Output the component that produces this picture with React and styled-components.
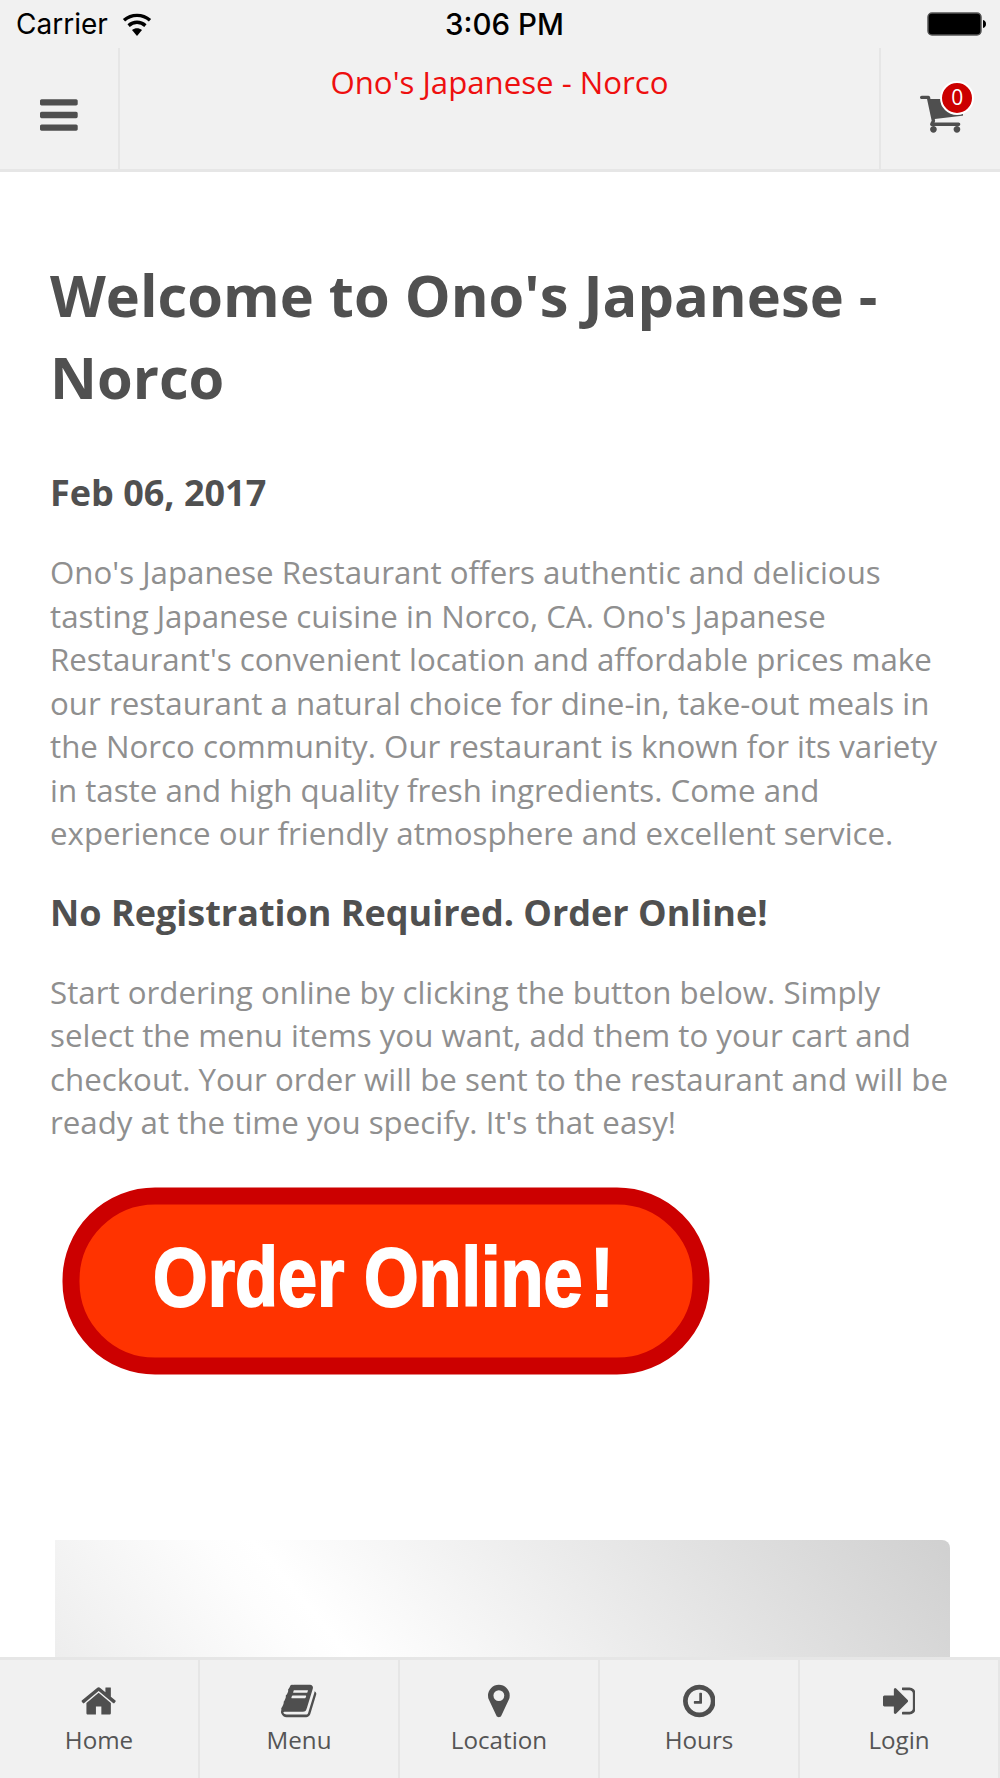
import React from "react";
import styled, { createGlobalStyle } from "styled-components";

const GlobalStyle = createGlobalStyle`
  html, body {
    margin: 0;
    padding: 0;
    background: #fff;
  }
  * {
    box-sizing: border-box;
  }
`;

const ICONS = {
  bars: {
    w: 1536,
    d: "M1536 1344v128q0 26-19 45t-45 19h-1408q-26 0-45-19t-19-45v-128q0-26 19-45t45-19h1408q26 0 45 19t19 45zm0-512v128q0 26-19 45t-45 19h-1408q-26 0-45-19t-19-45v-128q0-26 19-45t45-19h1408q26 0 45 19t19 45zm0-512v128q0 26-19 45t-45 19h-1408q-26 0-45-19t-19-45v-128q0-26 19-45t45-19h1408q26 0 45 19t19 45z",
  },
  cart: {
    w: 1664,
    d: "M640 1536q0 52-38 90t-90 38-90-38-38-90 38-90 90-38 90 38 38 90zm896 0q0 52-38 90t-90 38-90-38-38-90 38-90 90-38 90 38 38 90zm128-1088v512q0 24-16.5 42.5t-40.5 21.5l-1044 122q13 60 13 70 0 16-24 64h920q26 0 45 19t19 45-19 45-45 19h-1024q-26 0-45-19t-19-45q0-11 8-31.5t16-36 21.5-40 15.5-29.5l-177-823h-204q-26 0-45-19t-19-45 19-45 45-19h256q16 0 28.5 6.5t19.5 15.5 13 24.5 8 26 5.5 29.5 4.5 26h1201q26 0 45 19t19 45z",
  },
  home: {
    w: 1664,
    d: "M1408 992v480q0 26-19 45t-45 19h-384v-384h-256v384h-384q-26 0-45-19t-19-45v-480q0-1 .5-3t.5-3l575-474 575 474q1 2 1 6zm223-69l-62 74q-8 9-21 11h-3q-13 0-21-7l-692-577-692 577q-12 8-24 7-13-2-21-11l-62-74q-8-10-7-23.5t11-21.5l719-599q32-26 76-26t76 26l244 204v-195q0-14 9-23t23-9h192q14 0 23 9t9 23v408l219 182q10 8 11 21.5t-7 23.5z",
  },
  book: {
    w: 1664,
    d: "M1639 478q40 57 18 129l-275 906q-19 64-76.5 107.5t-122.5 43.5h-923q-77 0-148.5-53.5t-99.5-131.5q-24-67-2-127 0-4 3-27t4-37q1-8-3-21.5t-3-19.5q2-11 8-21t16.5-23.5 16.5-23.5q23-38 45-91.5t30-91.5q3-10 .5-30t-.5-28q3-11 17-28t17-23q21-36 42-92t25-90q1-9-2.5-32t.5-28q4-13 22-30.5t22-22.5q19-26 42.5-84.5t27.5-96.5q1-8-3-25.5t-2-26.5q2-8 9-18t18-23 17-21q8-12 16.5-30.5t15-35 16-36 19.5-32 26.5-23.5 36-11.5 47.5 5.5l-1 3q38-9 51-9h761q74 0 114 56t18 130l-274 906q-36 119-71.5 153.5t-128.5 34.5h-869q-27 0-38 15-11 16-1 43 24 70 144 70h923q29 0 56-15.5t35-41.5l300-987q7-22 5-57 38 15 59 43zm-1064 2q-4 13 2 22.5t20 9.5h608q13 0 25.5-9.5t16.5-22.5l21-64q4-13-2-22.5t-20-9.5h-608q-13 0-25.5 9.5t-16.5 22.5zm-83 256q-4 13 2 22.5t20 9.5h608q13 0 25.5-9.5t16.5-22.5l21-64q4-13-2-22.5t-20-9.5h-608q-13 0-25.5 9.5t-16.5 22.5z",
  },
  marker: {
    w: 1024,
    d: "M768 640q0-106-75-181t-181-75-181 75-75 181 75 181 181 75 181-75 75-181zm256 0q0 109-33 179l-364 774q-16 33-47.5 52t-67.5 19-67.5-19-46.5-52l-365-774q-33-70-33-179 0-212 150-362t362-150 362 150 150 362z",
  },
  clock: {
    w: 1536,
    d: "M896 544v448q0 14-9 23t-23 9h-320q-14 0-23-9t-9-23v-64q0-14 9-23t23-9h224v-352q0-14 9-23t23-9h64q14 0 23 9t9 23zm416 352q0-148-73-273t-198-198-273-73-273 73-198 198-73 273 73 273 198 198 273 73 273-73 198-198 73-273zm224 0q0 209-103 385.5t-279.5 279.5-385.5 103-385.5-103-279.5-279.5-103-385.5 103-385.5 279.5-279.5 385.5-103 385.5 103 279.5 279.5 103 385.5z",
  },
  signIn: {
    w: 1536,
    d: "M1184 896q0 26-19 45l-544 544q-19 19-45 19t-45-19-19-45v-288h-448q-26 0-45-19t-19-45v-384q0-26 19-45t45-19h448v-288q0-26 19-45t45-19 45 19l544 544q19 19 19 45zm352-352v704q0 119-84.5 203.5t-203.5 84.5h-320q-13 0-22.5-9.5t-9.5-22.5q0-4-1-20t-.5-26.5 3-23.5 10-19.5 20.5-6.5h320q66 0 113-47t47-113v-704q0-66-47-113t-113-47h-312l-11.5-1-11.5-3-8-5.5-7-9-2-13.5q0-4-1-20t-.5-26.5 3-23.5 10-19.5 20.5-6.5h320q119 0 203.5 84.5t84.5 203.5z",
  },
};

const TABS = [
  { label: "Home", icon: "home" },
  { label: "Menu", icon: "book" },
  { label: "Location", icon: "marker" },
  { label: "Hours", icon: "clock" },
  { label: "Login", icon: "signIn" },
];

const Page = styled.div`
  width: 1000px;
  height: 1778px;
  display: flex;
  flex-direction: column;
  overflow: hidden;
  font-family: "Open Sans", "Liberation Sans", sans-serif;
`;

const StatusBar = styled.div`
  height: 48px;
  flex: none;
  display: grid;
  grid-template-columns: 1fr auto 1fr;
  align-items: center;
  padding: 0 13px 0 16px;
  background: #f1f1f1;
  color: #000;
  font-family: Inter, "Liberation Sans", sans-serif;
  font-size: 28px;
`;

const Carrier = styled.div`
  display: flex;
  align-items: center;
  gap: 14px;
`;

const Clock = styled.div`
  margin-left: 6px;
  font-size: 29.5px;
  font-weight: 500;
`;

const BatteryBox = styled.div`
  justify-self: end;
  display: flex;
`;

const Header = styled.header`
  height: 124px;
  flex: none;
  display: flex;
  background: #f1f1f1;
  border-bottom: 3px solid #e6e6e6;
`;

const HeaderSide = styled.div`
  width: ${(props) => props.$width}px;
  flex: none;
  display: flex;
  align-items: center;
  justify-content: center;
  padding-top: 12px;
`;

const Title = styled.div`
  flex: 1;
  border-left: 2px solid #e6e6e6;
  border-right: 2px solid #e6e6e6;
  padding-top: 14px;
  text-align: center;
  color: #ee0f0f;
  font-size: 31.2px;
  line-height: 40px;
`;

const CartWrap = styled.div`
  position: relative;
  display: flex;
  margin-left: 2px;
  margin-top: -4px;
`;

const CartBadge = styled.span`
  position: absolute;
  top: -8px;
  right: -11px;
  width: 34px;
  height: 34px;
  border-radius: 50%;
  border: 2px solid #fff;
  background: #cc0000;
  color: #fff;
  font-size: 21px;
  line-height: 29px;
  text-align: center;
`;

const Glyph = styled.svg`
  display: block;
  fill: ${(props) => props.$color || "#4f4f4f"};
`;

const Content = styled.main`
  flex: 1;
  min-height: 0;
  overflow: hidden;
  padding: 82px 46px 0 50px;
`;

const Heading = styled.h1`
  margin: 0;
  color: #505050;
  font-size: 57.75px;
  font-weight: 700;
  line-height: 81.5px;
`;

const SubHeading = styled.h2`
  margin: ${(props) => props.$top}px 0 0;
  color: #505050;
  font-size: 36px;
  font-weight: 700;
  line-height: 44px;
`;

const Paragraph = styled.p`
  margin: 36px 0 0;
  color: #8f8f8f;
  font-size: 31.28px;
  line-height: 43.5px;
`;

const OrderLink = styled.a`
  display: block;
  width: 660px;
  margin: 39px 0 0 6px;
`;

const PromoCard = styled.div`
  height: 120px;
  width: 895px;
  margin: 162px 0 0 5px;
  border-radius: 0 8px 0 0;
  background: linear-gradient(50deg, #ededed 0%, #fdfdfd 25%, #ffffff 30%, #d0d0d0 100%);
`;

const TabBar = styled.nav`
  height: 121px;
  flex: none;
  display: grid;
  grid-template-columns: repeat(5, 1fr);
  background: #f1f1f1;
  border-top: 3px solid #e6e6e6;
`;

const Tab = styled.div`
  display: flex;
  flex-direction: column;
  align-items: center;
  padding-top: 23px;
  border-right: 2px solid #e6e6e6;
  color: #555;
  font-size: 24.2px;
`;

const TabIcon = styled.div`
  height: 36px;
  display: flex;
  align-items: center;
  justify-content: center;
`;

const TabLabel = styled.div`
  margin-top: 4px;
  line-height: 34px;
`;

const Icon = ({ name, size, color }) => (
  <Glyph
    viewBox={`0 0 ${ICONS[name].w} 1792`}
    width={(size * ICONS[name].w) / 1792}
    height={size}
    $color={color}
  >
    <path d={ICONS[name].d} />
  </Glyph>
);

const Wifi = () => (
  <svg width="30" height="23" viewBox="0 0 30 23">
    <path d="M15 23l-5-6c3-2.500 7-2.500 10 0z" fill="#000" />
    <path d="M6.600 12.600c5-4.400 11.800-4.400 16.800 0M2 7.300c7.500-6.600 18.500-6.600 26 0" fill="none" stroke="#000" strokeWidth="3.400" />
  </svg>
);

const Battery = () => (
  <svg width="60" height="26" viewBox="0 0 60 26">
    <rect x="1" y="2" width="53" height="22" rx="4" fill="#000" stroke="#555" strokeWidth="1.500" />
    <path d="M56 9c2 .5 3 2 3 4s-1 3.500-3 4z" fill="#000" />
  </svg>
);

const OrderButton = () => (
  <svg viewBox="0 0 660 194" width="660" height="194" style={{ display: "block", filter: "blur(0.7px)" }}>
    <rect x="15" y="12" width="630" height="170" rx="84" ry="84" fill="#ff3300" stroke="#cc0000" strokeWidth="17" />
    <text
      transform="translate(97 122) scale(0.837 1)"
      fill="#fff"
      stroke="#fff"
      strokeWidth="2"
      fontFamily="Liberation Sans, sans-serif"
      fontWeight="700"
      fontSize="84"
    >
      Order Online<tspan dx="9">!</tspan>
    </text>
  </svg>
);

export default function App() {
  return (
    <Page>
      <GlobalStyle />
      <StatusBar>
        <Carrier>
          Carrier
          <Wifi />
        </Carrier>
        <Clock>3:06 PM</Clock>
        <BatteryBox>
          <Battery />
        </BatteryBox>
      </StatusBar>
      <Header>
        <HeaderSide $width={118}>
          <Icon name="bars" size={44} />
        </HeaderSide>
        <Title>Ono's Japanese - Norco</Title>
        <HeaderSide $width={119}>
          <CartWrap>
            <Icon name="cart" size={47} />
            <CartBadge>0</CartBadge>
          </CartWrap>
        </HeaderSide>
      </Header>
      <Content>
        <Heading>Welcome to Ono's Japanese - Norco</Heading>
        <SubHeading $top={54}>Feb 06, 2017</SubHeading>
        <Paragraph>
          Ono's Japanese Restaurant offers authentic and delicious tasting Japanese cuisine in Norco, CA. Ono's
          Japanese Restaurant's convenient location and affordable prices make our restaurant a natural choice for
          dine-in, take-out meals in the Norco community. Our restaurant is known for its variety in taste and high
          quality fresh ingredients. Come and experience our friendly atmosphere and excellent service.
        </Paragraph>
        <SubHeading $top={35}>No Registration Required. Order Online!</SubHeading>
        <Paragraph>
          Start ordering online by clicking the button below. Simply select the menu items you want, add them to
          your cart and checkout. Your order will be sent to the restaurant and will be ready at the time you
          specify. It's that easy!
        </Paragraph>
        <OrderLink>
          <OrderButton />
        </OrderLink>
        <PromoCard />
      </Content>
      <TabBar>
        {TABS.map((tab) => (
          <Tab key={tab.label}>
            <TabIcon>
              <Icon name={tab.icon} size={38} />
            </TabIcon>
            <TabLabel>{tab.label}</TabLabel>
          </Tab>
        ))}
      </TabBar>
    </Page>
  );
}
